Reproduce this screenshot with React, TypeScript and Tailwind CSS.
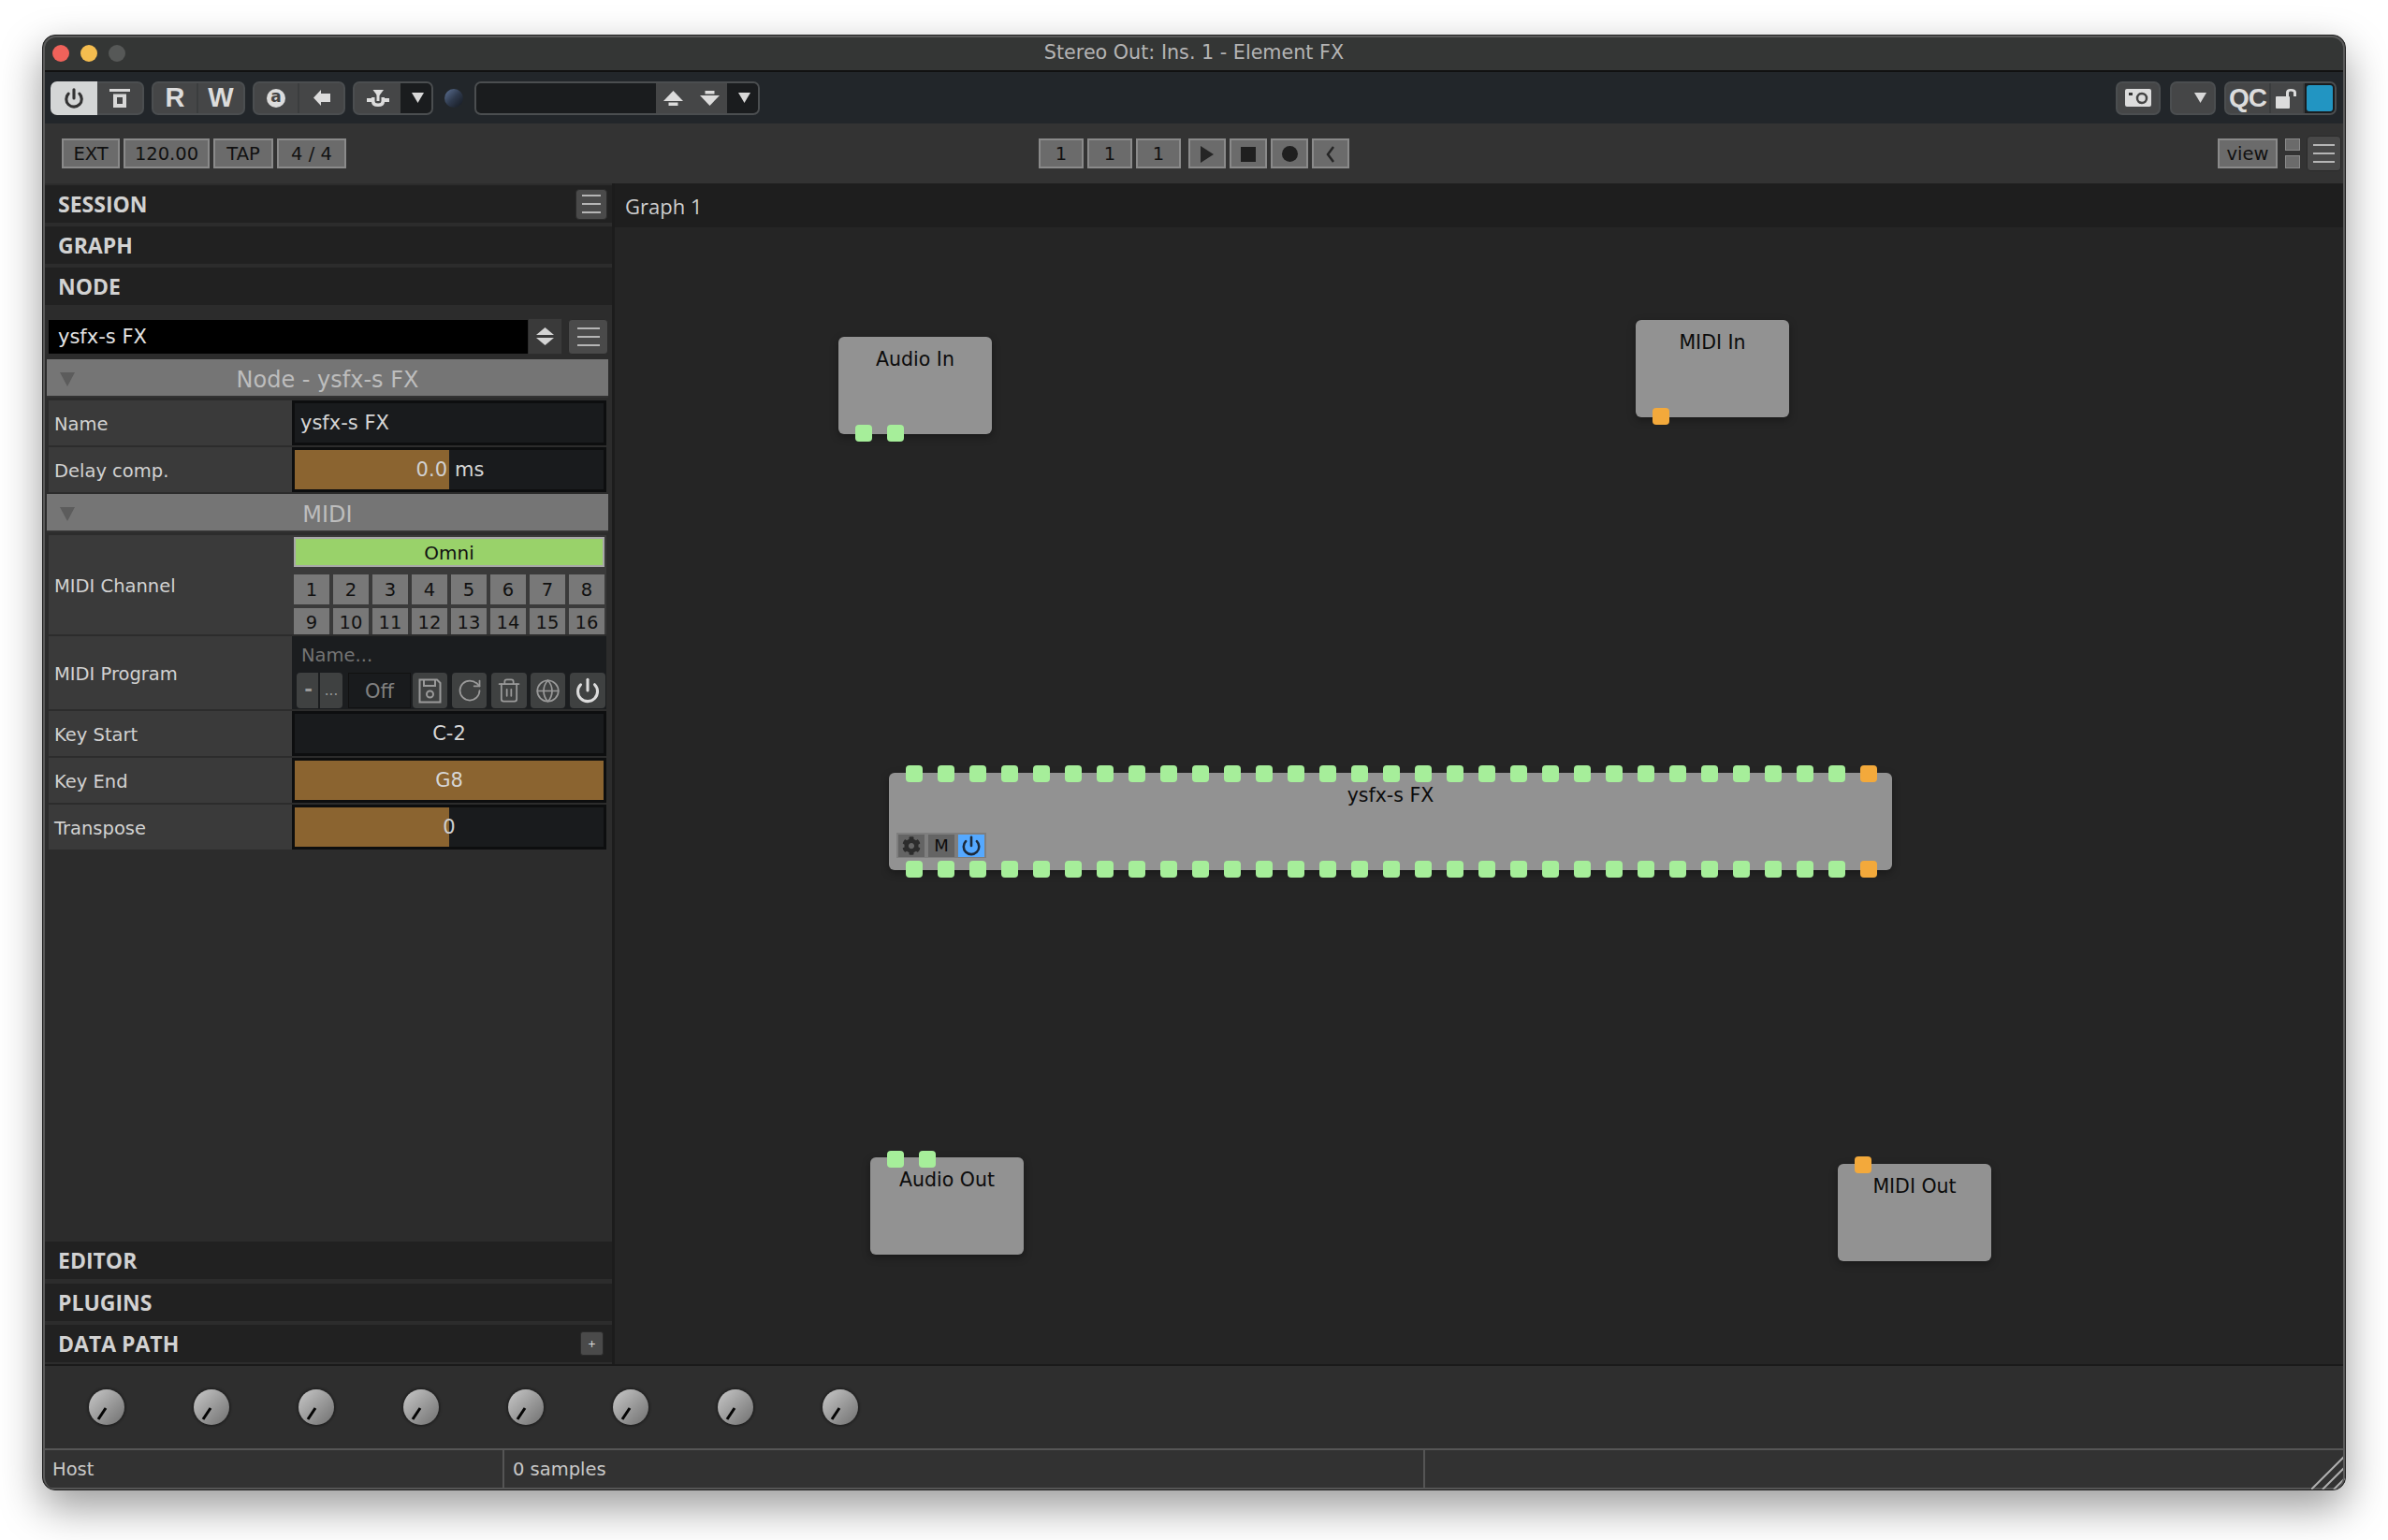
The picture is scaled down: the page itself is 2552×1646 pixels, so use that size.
import React from "react";
import { FaCog } from "react-icons/fa";
import { Globe, Power, RotateCw, Trash2 } from "lucide-react";

const Tri = ({ className = "" }: { className?: string }) => (
  <svg width="13" height="11" viewBox="0 0 13 11" className={className}>
    <path d="M0 0H13L6.5 11Z" fill="currentColor" />
  </svg>
);

const Burger = ({ w = "w-[23px]" }: { w?: string }) => (
  <div className={`flex flex-col gap-[7px] ${w}`}>
    <div className="h-[2px] bg-[#b5b5b5]" />
    <div className="h-[2px] bg-[#b5b5b5]" />
    <div className="h-[2px] bg-[#b5b5b5]" />
  </div>
);

const PanelHead = ({ title, children }: { title: string; children?: React.ReactNode }) => (
  <div className="flex h-[40px] shrink-0 items-center justify-between bg-[#212121] pl-[16px] pr-[5px] font-['Open_Sans',sans-serif] text-[23px] font-bold text-[#d2d2d2]">
    {title}
    {children}
  </div>
);

const SectionHead = ({ title }: { title: string }) => (
  <div className="relative ml-[4px] flex h-[41px] w-[600px] shrink-0 items-center justify-center border-b-2 border-[#333] bg-[#757575] pt-[5px] text-[24px] text-[#bdbdbd]">
    <svg width="16" height="15" viewBox="0 0 16 15" className="absolute left-[14px] top-[14px] text-[#5c5c5c]">
      <path d="M0 0H16L8 15Z" fill="currentColor" />
    </svg>
    {title}
  </div>
);

const Row = ({ label, h = "h-[48px]", mt = "mt-[2px]", children }: { label: string; h?: string; mt?: string; children: React.ReactNode }) => (
  <div className={`ml-[6px] flex w-[596px] shrink-0 ${h} ${mt}`}>
    <div className="flex w-[260px] items-center bg-[#3a3a3a] pl-[6px] pt-[3px] text-[19.5px] text-[#d2d2d2]">{label}</div>
    <div className="min-w-0 flex-1">{children}</div>
  </div>
);

const ValueBox = ({ children, className = "" }: { children?: React.ReactNode; className?: string }) => (
  <div className={`relative flex h-full items-center border-[3px] border-[#0d0e0f] bg-[#191b1d] pt-[2px] text-[21px] text-[#d6d6d6] ${className}`}>{children}</div>
);

const ProgBtn = ({ children, className = "" }: { children: React.ReactNode; className?: string }) => (
  <div className={`flex h-[38px] items-center justify-center rounded-[4px] bg-[#3f4141] text-[#9a9a9a] ${className}`}>{children}</div>
);

const Group = ({ children, className = "" }: { children: React.ReactNode; className?: string }) => (
  <div className={`flex h-[36px] overflow-hidden rounded-[7px] border-2 border-[#4b4e50] bg-[#454647] ${className}`}>{children}</div>
);

const Seg = ({ children, className = "" }: { children?: React.ReactNode; className?: string }) => (
  <div className={`flex items-center justify-center text-[#dcdcdc] ${className}`}>{children}</div>
);

const TBtn = ({ children, className = "" }: { children: React.ReactNode; className?: string }) => (
  <div className={`flex h-[32px] items-center justify-center border-2 border-[#8a8a8a] bg-[#6b6b6b] pt-[1px] text-[19.5px] text-[#111] ${className}`}>{children}</div>
);

const Port = ({ orange = false }: { orange?: boolean }) => (
  <div className={`h-[18px] w-[18px] shrink-0 rounded-[4px] ${orange ? "bg-[#f3a93b]" : "bg-[#a6ee9a]"}`} />
);

const PortRow = ({ n, orange = false, className = "" }: { n: number; orange?: boolean; className?: string }) => (
  <div className={`absolute left-[18px] flex gap-[16px] ${className}`}>
    {Array.from({ length: n }).map((_, i) => (
      <Port key={i} orange={orange || (n === 31 && i === n - 1)} />
    ))}
  </div>
);

const GraphNode = ({ title, pos, w = "w-[164px]", children }: { title: string; pos: string; w?: string; children?: React.ReactNode }) => (
  <div className={`absolute h-[104px] rounded-[6px] bg-[#929292] pt-[13px] text-center text-[20.5px] leading-[22px] text-[#0c0c0c] shadow-[0_3px_8px_rgba(0,0,0,0.35)] ${pos} ${w}`}>
    {title}
    {children}
  </div>
);

const Knob = () => (
  <div className="relative h-[38px] w-[38px] rounded-full bg-gradient-to-br from-[#c9c9c9] to-[#707070] shadow-[0_0_2px_2px_rgba(0,0,0,0.25)]">
    <svg width="38" height="38" viewBox="0 0 38 38" className="absolute inset-0">
      <line x1="18" y1="20" x2="10" y2="32" stroke="#050505" strokeWidth="3" />
    </svg>
  </div>
);

const UpArrow = () => (
  <svg width="21" height="16" viewBox="0 0 21 16">
    <path d="M0 11L10.5 0L21 11Z" fill="#dcdcdc" />
    <rect x="5.5" y="12.5" width="10" height="3.5" fill="#dcdcdc" />
  </svg>
);

const DownArrow = () => (
  <svg width="21" height="16" viewBox="0 0 21 16">
    <rect x="5.5" y="0" width="10" height="3.5" fill="#dcdcdc" />
    <path d="M0 5L21 5L10.5 16Z" fill="#dcdcdc" />
  </svg>
);

export default function App() {
  return (
    <div className="h-[1646px] w-[2552px] overflow-hidden bg-white pl-[45px] pt-[37px] font-['DejaVu_Sans',sans-serif]">
      <div className="relative flex h-[1556px] w-[2462px] flex-col overflow-hidden rounded-[14px] border border-[#1e1e1e] bg-[#2c2c2c] shadow-[0_18px_45px_rgba(0,0,0,0.4)]">
        {/* Title bar */}
        <div className="relative flex h-[39px] shrink-0 items-center justify-center border-b-2 border-[#111] bg-[#343635] pt-[1px] text-[20.7px] text-[#b4b4b4]">
          <div className="absolute left-[10px] top-[10px] flex gap-[12.5px]">
            <div className="h-[17.5px] w-[17.5px] rounded-full bg-[#f0625a]" />
            <div className="h-[17.5px] w-[17.5px] rounded-full bg-[#f5bd4f]" />
            <div className="h-[17.5px] w-[17.5px] rounded-full bg-[#565857]" />
          </div>
          Stereo Out: Ins. 1 - Element FX
        </div>

        {/* Toolbar */}
        <div className="flex h-[55px] shrink-0 items-center bg-[#22262a] pl-[8px] pr-[9px]">
          <div className="flex">
            <Seg className="h-[36px] w-[50px] rounded-l-[7px] bg-[#d4d6d6]">
              <Power size={22} strokeWidth={3.4} className="text-[#333]" />
            </Seg>
            <Group className="w-[50px] rounded-l-none border-l-0">
              <Seg className="flex-1">
                <svg width="22" height="20" viewBox="0 0 22 20" fill="#d8d8d8">
                  <rect x="0" y="0" width="22" height="3" />
                  <path fillRule="evenodd" d="M4 5.5H18V20H4ZM8 9V16H14V9Z" />
                </svg>
              </Seg>
            </Group>
          </div>
          <Group className="ml-[8px] w-[100px] font-['Liberation_Sans',sans-serif] text-[29px] font-bold">
            <Seg className="w-[48px] border-r-2 border-[#3b3d3e]">R</Seg>
            <Seg className="flex-1">W</Seg>
          </Group>
          <Group className="ml-[8px] w-[99px]">
            <Seg className="w-[48px] border-r-2 border-[#3b3d3e]">
              <div className="flex h-[20px] w-[20px] items-center justify-center rounded-full bg-[#dcdcdc] pb-[1px] text-[17px] font-bold text-[#444]">a</div>
            </Seg>
            <Seg className="flex-1">
              <svg width="18" height="17" viewBox="0 0 18 17" fill="#dcdcdc">
                <path d="M0 8.5L8 0V4H18V13H8V17Z" />
              </svg>
            </Seg>
          </Group>
          <Group className="ml-[8px] w-[86px]">
            <Seg className="w-[49px]">
              <svg width="24" height="19" viewBox="0 0 24 19" fill="#dcdcdc">
                <path d="M6.5 1H18L13.5 7H11Z" />
                <rect x="10.5" y="6" width="3" height="7" />
                <rect x="0" y="10" width="5" height="4" />
                <rect x="19" y="10" width="5" height="4" />
                <path d="M5 9H8.5V13Q8.5 15.5 12 15.5Q15.5 15.5 15.5 13V9H19V14Q19 19 12 19Q5 19 5 14Z" />
              </svg>
            </Seg>
            <Seg className="flex-1 bg-[#1a1c1e] pl-[4px]">
              <Tri className="text-[#d8d8d8]" />
            </Seg>
          </Group>
          <div className="ml-[12px] h-[20px] w-[20px] rounded-full bg-gradient-to-br from-[#5f7498] via-[#2f3a4d] to-[#14181f]" />
          <Group className="ml-[12px] w-[305px]">
            <Seg className="w-[192px] bg-[#1a1c1e]" />
            <Seg className="w-[76px] gap-[18px] bg-[#454647]">
              <UpArrow />
              <DownArrow />
            </Seg>
            <Seg className="flex-1 bg-[#1a1c1e] pl-[4px]">
              <Tri className="text-[#d8d8d8]" />
            </Seg>
          </Group>

          <Group className="ml-auto w-[48px]">
            <Seg className="flex-1">
              <svg width="28" height="19" viewBox="0 0 28 19">
                <rect width="28" height="19" rx="2" fill="#dcdcdc" />
                <rect x="4" y="4" width="4" height="3" fill="#333" />
                <circle cx="18" cy="10" r="5" fill="none" stroke="#444" strokeWidth="2.5" />
              </svg>
            </Seg>
          </Group>
          <Group className="ml-[10px] w-[49px] bg-[#1a1c1e]">
            <Seg className="flex-1 justify-end pr-[8px]">
              <Tri className="text-[#d8d8d8]" />
            </Seg>
          </Group>
          <Group className="ml-[9px] w-[120px]">
            <Seg className="w-[48px] border-r-2 border-[#3b3d3e] font-['Liberation_Sans',sans-serif] text-[28px] font-bold tracking-[-1px]">QC</Seg>
            <Seg className="w-[36px] border-r-2 border-[#3b3d3e]">
              <svg width="24" height="22" viewBox="0 0 24 22" fill="#dcdcdc">
                <rect x="0" y="9" width="15" height="13" rx="1" />
                <path d="M11 9V5Q11 1 16 1Q22 1 22 5V9H19V5Q19 3.5 16 3.5Q14 3.5 14 5V9Z" />
              </svg>
            </Seg>
            <Seg className="flex-1 bg-[#1a1c1e] p-[2px]">
              <div className="h-full w-full rounded-[3px] bg-[#2295c2]" />
            </Seg>
          </Group>
        </div>

        {/* Transport */}
        <div className="flex h-[64px] shrink-0 items-center bg-[#333333] pl-[20px]">
          <div className="flex gap-[4px]">
            <TBtn className="w-[62px]">EXT</TBtn>
            <TBtn className="w-[92px]">120.00</TBtn>
            <TBtn className="w-[64px]">TAP</TBtn>
            <TBtn className="w-[74px]">4 / 4</TBtn>
          </div>
          <div className="ml-[740px] flex gap-[4px]">
            <TBtn className="w-[48px]">1</TBtn>
            <TBtn className="w-[48px]">1</TBtn>
            <TBtn className="mr-[4px] w-[48px]">1</TBtn>
            <TBtn className="w-[40px]">
              <svg width="14" height="18" viewBox="0 0 14 18" fill="#252525"><path d="M0 0L14 9L0 18Z" /></svg>
            </TBtn>
            <TBtn className="w-[40px]">
              <div className="h-[16px] w-[16px] bg-[#1f1f1f]" />
            </TBtn>
            <TBtn className="w-[40px]">
              <div className="h-[17px] w-[17px] rounded-full bg-[#1f1f1f]" />
            </TBtn>
            <TBtn className="w-[40px]">
              <svg width="12" height="18" viewBox="0 0 12 18" fill="none" stroke="#252525" strokeWidth="2.5"><path d="M9 1L3 9L9 17" /></svg>
            </TBtn>
          </div>
          <div className="ml-[928px] flex items-center">
            <TBtn className="w-[64px]">view</TBtn>
            <div className="ml-[8px] flex w-[16px] flex-col gap-[5px]">
              <div className="h-[13px] border border-[#8a8a8a] bg-[#6b6b6b]" />
              <div className="h-[14px] border border-[#8a8a8a] bg-[#6b6b6b]" />
            </div>
            <div className="ml-[7px] flex h-[38px] w-[37px] items-center justify-center rounded-[4px] border border-[#2a2a2a] bg-[#484848]">
              <Burger w="w-[23px]" />
            </div>
          </div>
        </div>

        {/* Main */}
        <div className="flex min-h-0 flex-1 border-b-2 border-[#1a1a1a]">
          {/* Left panel */}
          <div className="flex w-[608px] shrink-0 flex-col bg-[#2c2c2c] pt-[2px]">
            <PanelHead title="SESSION">
              <div className="flex h-[33px] w-[34px] items-center justify-center rounded-[4px] border border-[#2a2a2a] bg-[#4a4a4a]">
                <Burger w="w-[20px]" />
              </div>
            </PanelHead>
            <div className="mt-[4px]"><PanelHead title="GRAPH" /></div>
            <div className="mt-[4px]"><PanelHead title="NODE" /></div>

            <div className="ml-[6px] mt-[14px] flex h-[39px] w-[598px] shrink-0 items-center">
              <div className="flex h-[36px] w-[512px] items-center bg-black pl-[10px] pt-[2px] text-[21px] text-[#e4e4e4]">ysfx-s FX</div>
              <div className="flex h-[39px] w-[37px] flex-col items-center justify-center gap-[3px] border border-[#2d2d2d] bg-[#3a3a3a]">
                <svg width="19" height="8" viewBox="0 0 19 8" fill="#d4d4d4"><path d="M0 8L9.5 0L19 8Z" /></svg>
                <svg width="19" height="8" viewBox="0 0 19 8" fill="#d4d4d4"><path d="M0 0H19L9.5 8Z" /></svg>
              </div>
              <div className="ml-[6px] flex h-[38px] w-[43px] items-center justify-center rounded-[4px] border border-[#2a2a2a] bg-[#4a4a4a]">
                <Burger w="w-[24px]" />
              </div>
            </div>

            <div className="mt-[5px]"><SectionHead title="Node - ysfx-s FX" /></div>
            <Row label="Name" mt="mt-[3px]">
              <ValueBox className="pl-[6px]">ysfx-s FX</ValueBox>
            </Row>
            <Row label="Delay comp.">
              <ValueBox>
                <div className="absolute inset-y-0 left-0 w-1/2 bg-[#8b6430]" />
                <div className="relative flex w-1/2 justify-end pr-[2px] text-[#d0d0d0]">0.0</div>
                <span className="relative ml-[6px]">ms</span>
              </ValueBox>
            </Row>
            <div className="mt-[2px]"><SectionHead title="MIDI" /></div>
            <Row label="MIDI Channel" h="h-[106px]" mt="mt-[3px]">
              <div className="flex h-full flex-col bg-[#3a3a3a] pl-[2px] pr-[2px] pt-[2px]">
                <div className="flex h-[32px] shrink-0 items-center justify-center border-2 border-[#a8a8a8] bg-[#99d26a] pt-[1px] text-[20px] text-[#111]">Omni</div>
                <div className="mt-[8px] grid grid-cols-8 gap-x-[4px] gap-y-[4px] text-[19.5px] text-[#111]">
                  {[1, 2, 3, 4, 5, 6, 7, 8].map((n) => (
                    <div key={n} className="flex h-[32px] items-center justify-center bg-[#787878] pt-[1px]">{n}</div>
                  ))}
                  {[9, 10, 11, 12, 13, 14, 15, 16].map((n) => (
                    <div key={n} className="flex h-[28px] items-start justify-center overflow-hidden bg-[#787878] leading-[32px]">{n}</div>
                  ))}
                </div>
              </div>
            </Row>
            <Row label="MIDI Program" h="h-[78px]">
              <div className="flex h-full flex-col bg-[#1b1d1f] pl-[5px] pr-[1px]">
                <div className="flex h-[39px] shrink-0 items-center pl-[5px] pt-[2px] text-[19.5px] text-[#747474]">Name...</div>
                <div className="flex">
                  <ProgBtn className="w-[23px] rounded-r-none pl-[2px] text-[21px] font-bold">-</ProgBtn>
                  <ProgBtn className="ml-[2px] w-[24px] rounded-l-none text-[15px]">...</ProgBtn>
                  <div className="ml-[6px] flex h-[38px] w-[67px] items-center justify-center border border-[#111] bg-[#191b1d] pt-[3px] text-[21px] text-[#808080]">Off</div>
                  <ProgBtn className="ml-[2px] w-[37px]">
                    <svg width="25" height="27" viewBox="0 0 25 27" fill="none" stroke="currentColor" strokeWidth="2">
                      <path d="M1.5 1.5H20L23.5 5V25.5H1.5Z" />
                      <path d="M6 1.5V8H18V1.5" />
                      <circle cx="12.5" cy="17" r="3.5" />
                    </svg>
                  </ProgBtn>
                  <ProgBtn className="ml-[5px] w-[37px]"><RotateCw size={28} strokeWidth={1.5} /></ProgBtn>
                  <ProgBtn className="ml-[5px] w-[38px]"><Trash2 size={28} strokeWidth={1.5} /></ProgBtn>
                  <ProgBtn className="ml-[4px] w-[37px]"><Globe size={27} strokeWidth={1.5} /></ProgBtn>
                  <ProgBtn className="ml-[5px] w-[38px] text-[#dcdcdc]"><Power size={28} strokeWidth={2.6} /></ProgBtn>
                </div>
              </div>
            </Row>
            <Row label="Key Start">
              <ValueBox className="justify-center">C-2</ValueBox>
            </Row>
            <Row label="Key End">
              <ValueBox className="justify-center !bg-[#8b6430] text-[#d0d0d0]">G8</ValueBox>
            </Row>
            <Row label="Transpose">
              <ValueBox className="justify-center">
                <div className="absolute inset-y-0 left-0 w-1/2 bg-[#8b6430]" />
                <span className="relative text-[#d0d0d0]">0</span>
              </ValueBox>
            </Row>

            <div className="flex-1" />
            <PanelHead title="EDITOR" />
            <div className="mt-[5px]"><PanelHead title="PLUGINS" /></div>
            <div className="mb-[2px] mt-[4px]">
              <PanelHead title="DATA PATH">
                <div className="mr-[4px] flex h-[26px] w-[25px] items-center justify-center rounded-[3px] border border-[#2a2a2a] bg-[#4a4a4a] text-[14px] font-normal text-[#ddd]">+</div>
              </PanelHead>
            </div>
          </div>

          <div className="w-[3px] shrink-0 bg-[#1c1c1c]" />

          {/* Graph */}
          <div className="flex min-w-0 flex-1 flex-col">
            <div className="flex h-[47px] shrink-0 items-center bg-[#1e1e1e] pl-[11px] pt-[2px] font-['Open_Sans',sans-serif] text-[22px] text-[#cfcfcf]">Graph 1</div>
            <div className="relative flex-1 bg-[#252525]">
              <GraphNode title="Audio In" pos="left-[239px] top-[117px]">
                <PortRow n={2} className="top-[94px]" />
              </GraphNode>
              <GraphNode title="MIDI In" pos="left-[1091px] top-[99px]">
                <PortRow n={1} orange className="top-[94px]" />
              </GraphNode>
              <GraphNode title="ysfx-s FX" pos="left-[293px] top-[583px]" w="w-[1072px]">
                <PortRow n={31} className="top-[-8px]" />
                <PortRow n={31} className="top-[94px]" />
                <div className="absolute left-[8px] top-[64px] flex h-[27px] w-[96px] items-center gap-[4px] bg-[#7e7e7e] px-[2px]">
                  <div className="flex h-[24px] w-[28px] items-center justify-center bg-[#646464] text-[#2c2c2c]">
                    <FaCog size={20} />
                  </div>
                  <div className="flex h-[24px] w-[28px] items-center justify-center bg-[#646464] text-[18px] text-[#0c0c0c]">M</div>
                  <div className="flex h-[24px] w-[28px] items-center justify-center bg-[#55a9ff] text-[#1c2a3a]">
                    <Power size={22} strokeWidth={2.8} />
                  </div>
                </div>
              </GraphNode>
              <GraphNode title="Audio Out" pos="left-[273px] top-[994px]">
                <PortRow n={2} className="top-[-7px]" />
              </GraphNode>
              <GraphNode title="MIDI Out" pos="left-[1307px] top-[1001px]">
                <PortRow n={1} orange className="top-[-8px]" />
              </GraphNode>
            </div>
          </div>
        </div>

        {/* Knobs */}
        <div className="flex h-[88px] shrink-0 items-center gap-[74px] bg-[#2e2e2e] pl-[49px]">
          {[0, 1, 2, 3, 4, 5, 6, 7].map((k) => (
            <Knob key={k} />
          ))}
        </div>

        {/* Status */}
        <div className="flex h-[44px] shrink-0 border-y-2 border-[#555] bg-[#323232] text-[19.5px] text-[#c8c8c8]">
          <div className="flex w-[493px] items-center border-r-2 border-[#555] pl-[10px] pt-[2px]">Host</div>
          <div className="flex w-[984px] items-center border-r-2 border-[#555] pl-[9px] pt-[2px]">0 samples</div>
          <div className="flex-1" />
        </div>

        {/* Resize corner */}
        <svg width="36" height="36" viewBox="0 0 36 36" className="absolute bottom-0 right-0" fill="none" stroke="#b0b0b0" strokeWidth="2">
          <path d="M0 36L36 0M12 36L36 12M24 36L36 24" />
        </svg>
        {/* Frame highlight */}
        <div className="pointer-events-none absolute inset-0 rounded-[14px] border-x-2 border-t-2 border-[#5a5a5a]" />
      </div>
    </div>
  );
}
